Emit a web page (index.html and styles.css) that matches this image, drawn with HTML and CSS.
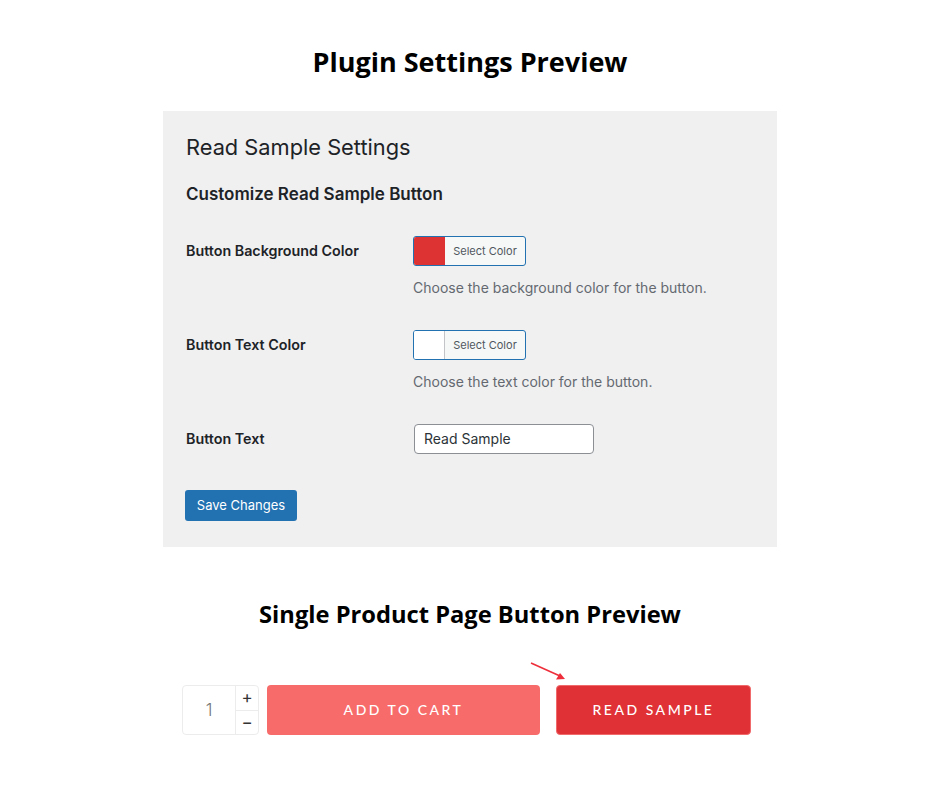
FILE: index.html
```html
<!DOCTYPE html>
<html>
<head>
<meta charset="utf-8">
<link rel="stylesheet" href="styles.css">
</head>
<body>
<h1 class="title">Plugin Settings Preview</h1>
<section class="panel">
  <h2 class="panel-title">Read Sample Settings</h2>
  <h3 class="panel-sub">Customize Read Sample Button</h3>
  <div class="row">
    <div class="label">Button Background Color</div>
    <div class="field">
      <div class="picker"><span class="swatch swatch-red"></span><span class="picker-text">Select Color</span></div>
      <p class="desc">Choose the background color for the button.</p>
    </div>
  </div>
  <div class="row">
    <div class="label">Button Text Color</div>
    <div class="field">
      <div class="picker"><span class="swatch swatch-white"></span><span class="picker-text">Select Color</span></div>
      <p class="desc">Choose the text color for the button.</p>
    </div>
  </div>
  <div class="row">
    <div class="label label-input">Button Text</div>
    <div class="field">
      <div class="text-input">Read Sample</div>
    </div>
  </div>
  <div class="save">Save Changes</div>
</section>
<h1 class="title title2">Single Product Page Button Preview</h1>
<div class="product">
  <div class="qty">
    <div class="qty-num">1</div>
    <div class="qty-ctrl">
      <div class="qty-btn">+</div>
      <div class="qty-btn">&minus;</div>
    </div>
  </div>
  <div class="btn btn-cart">ADD TO CART</div>
  <div class="btn btn-sample">READ SAMPLE</div>
  <svg class="arrow" width="40" height="22" viewBox="0 0 40 22">
    <line x1="1" y1="1" x2="30" y2="14" stroke="#ee2e3a" stroke-width="1.6"/>
    <polygon points="35,17 26,17.5 30,11" fill="#ee2e3a"/>
  </svg>
</div>
</body>
</html>
```
FILE: styles.css
```css
* { box-sizing: border-box; }
body {
  margin: 0;
  background: #fff;
  font-family: Inter, "Noto Sans", sans-serif;
  width: 940px;
  height: 788px;
  overflow: hidden;
}
.title {
  margin: 45px 0 0;
  text-align: center;
  font-family: "Open Sans", sans-serif;
  font-weight: 700;
  font-size: 27px;
  line-height: 34px;
  color: #000;
}
.title2 {
  margin-top: 52px;
  font-size: 23.7px;
  line-height: 30px;
}
.panel {
  width: 614px;
  margin: 32px auto 0;
  height: 436px;
  background: #f0f0f1;
  padding: 22px 23px 0;
  color: #1d2327;
}
.panel-title {
  margin: 0;
  font-weight: 400;
  font-size: 21.8px;
  line-height: 29px;
}
.panel-sub {
  margin: 21px 0 0;
  font-weight: 600;
  font-size: 17px;
  line-height: 22px;
}
.row {
  display: flex;
  margin-top: 31px;
}
.row + .row { margin-top: 32px; }
.label {
  width: 227px;
  font-size: 14.3px;
  font-weight: 600;
  line-height: 30px;
}
.label-input { line-height: 29px; }
.field { display: flex; flex-direction: column; }
.picker {
  display: flex;
  width: 113px;
  height: 30px;
  border: 1px solid #2271b1;
  border-radius: 3px;
  overflow: hidden;
  background: #f6f7f7;
}
.swatch {
  width: 31px;
  height: 100%;
  border-right: 1px solid #c3c4c7;
}
.swatch-red { background: #dd3333; border-right-color: #dd3333; }
.swatch-white { background: #fff; }
.picker-text {
  flex: 1;
  font-size: 11px;
  line-height: 28px;
  color: #50575e;
  text-align: center;
}
.desc {
  margin: 12px 0 0;
  font-size: 14px;
  line-height: 20px;
  color: #646970;
}
.text-input {
  width: 180px;
  height: 30px;
  margin-left: 1px;
  background: #fff;
  border: 1px solid #8c8f94;
  border-radius: 4px;
  font-size: 14px;
  line-height: 28px;
  padding-left: 9px;
  color: #2c3338;
}
.save {
  margin-top: 36px;
  margin-left: -1px;
  width: 112px;
  height: 31px;
  background: #2271b1;
  border-radius: 3px;
  color: #fff;
  font-size: 13px;
  line-height: 31px;
  text-align: center;
}
.product {
  position: relative;
  display: flex;
  margin: 56px 0 0 182px;
  height: 50px;
}
.qty {
  display: flex;
  width: 77px;
  height: 50px;
  border: 1px solid #ececec;
  border-radius: 4px;
}
.qty-num {
  width: 53px;
  text-align: center;
  line-height: 48px;
  font-size: 17px;
  font-weight: 300;
  color: #777;
  border-right: 1px solid #ececec;
}
.qty-ctrl { flex: 1; display: flex; flex-direction: column; }
.qty-btn {
  flex: 1;
  text-align: center;
  font-size: 17px;
  line-height: 23px;
  color: #333;
}
.qty-btn + .qty-btn { border-top: 1px solid #ececec; }
.btn {
  height: 50px;
  border-radius: 4px;
  color: #fff;
  font-family: "Lato", sans-serif;
  font-weight: 500;
  font-size: 14px;
  letter-spacing: 2.5px;
  line-height: 50px;
  text-align: center;
}
.btn-cart {
  width: 273px;
  margin-left: 8px;
  background: #f76b6b;
}
.btn-sample {
  width: 195px;
  margin-left: 16px;
  background: #e03236;
  border: 1px solid #f06a6c;
  line-height: 48px;
}
.arrow {
  position: absolute;
  left: 348px;
  top: -23px;
}
```
